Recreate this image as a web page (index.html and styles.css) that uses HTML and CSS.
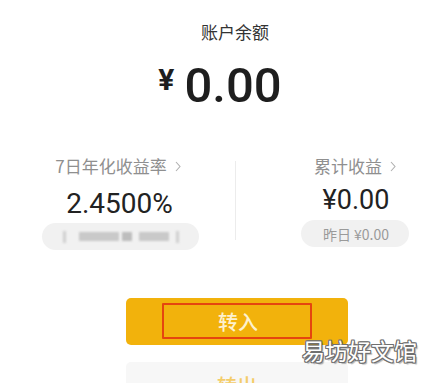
FILE: index.html
```html
<!DOCTYPE html>
<html lang="zh">
<head>
<meta charset="utf-8">
<link rel="stylesheet" href="styles.css">
</head>
<body>
<div class="page">
  <div class="title">账户余额</div>
  <div class="amount"><span class="yen">¥</span><span class="num">0.00</span></div>

  <div class="stats">
    <div class="col col-left">
      <div class="label">7日年化收益率<svg class="chev" width="6" height="11" viewBox="0 0 6 11"><path d="M1 1 L5 5.5 L1 10" fill="none" stroke="#b0b0b0" stroke-width="1.1"/></svg></div>
      <div class="value v-left">2.4500%</div>
      <div class="pill pill-left">
        <span class="blur b1"></span><span class="blur b2"></span><span class="blur b3"></span><span class="blur b4"></span><span class="blur b5"></span>
      </div>
    </div>
    <div class="divider"></div>
    <div class="col col-right">
      <div class="label">累计收益<svg class="chev" width="6" height="11" viewBox="0 0 6 11"><path d="M1 1 L5 5.5 L1 10" fill="none" stroke="#b0b0b0" stroke-width="1.1"/></svg></div>
      <div class="value v-right">¥0.00</div>
      <div class="pill pill-right">昨日 ¥0.00</div>
    </div>
  </div>

  <div class="actions">
    <div class="btn btn-in">转入<span class="mark"></span></div>
    <div class="btn btn-out">转出</div>
    <div class="watermark">易坊好文馆</div>
  </div>
</div>
</body>
</html>
```

FILE: styles.css
```css
html, body {
  margin: 0;
  padding: 0;
  background: #ffffff;
}
.page {
  width: 446px;
  height: 383px;
  overflow: hidden;
  position: relative;
  padding-top: 22px;
  box-sizing: border-box;
  font-family: "Noto Sans CJK SC", "Noto Sans", sans-serif;
}
.title {
  text-align: center;
  padding-left: 24px;
  font-size: 17px;
  line-height: 20px;
  color: #333333;
}
.amount {
  margin-top: 19px;
  display: flex;
  justify-content: center;
  align-items: flex-start;
  padding-right: 6px;
  font-family: Roboto, "Liberation Sans", sans-serif;
  color: #1e1e1e;
}
.yen {
  font-size: 30px;
  font-weight: 700;
  line-height: 30px;
  margin-top: 4px;
  margin-right: 10px;
}
.num {
  font-size: 49px;
  line-height: 49px;
  font-weight: 500;
}
.stats {
  margin-top: 46px;
  display: flex;
  align-items: stretch;
}
.col {
  display: flex;
  flex-direction: column;
  align-items: center;
}
.col-left {
  width: 235px;
  padding-left: 1px;
  box-sizing: border-box;
}
.col-right {
  flex: 1;
  padding-left: 28px;
}
.divider {
  width: 1px;
  background: #ececec;
  margin: 5px 0 10px;
}
.label {
  font-size: 17px;
  line-height: 20px;
  color: #8f8f8f;
  display: flex;
  align-items: center;
}
.chev {
  margin-left: 8px;
  margin-top: 1px;
}
.value {
  font-family: Roboto, "Liberation Sans", sans-serif;
  color: #222222;
}
.v-left {
  font-size: 28px;
  line-height: 28px;
  margin-top: 14px;
  padding-left: 3px;
}
.v-right {
  font-size: 27px;
  line-height: 27px;
  margin-top: 11px;
  padding-left: 2px;
}
.pill {
  background: #f1f1f1;
  border-radius: 14px;
  height: 27px;
  display: flex;
  align-items: center;
  justify-content: center;
}
.pill-left {
  width: 157px;
  margin-top: 5px;
  margin-left: 5px;
  position: relative;
  gap: 3px;
}
.v-right + .pill-right {
  margin-top: 6px;
}
.pill-right {
  width: 106px;
  font-size: 14px;
  color: #9a9a9a;
  font-family: "Noto Sans CJK SC", Roboto, sans-serif;
  padding-left: 2px;
}
.blur {
  display: block;
  height: 9px;
  background: #c9c9c9;
  filter: blur(1.2px);
}
.b1 { width: 3px; height: 12px; background: #d0d0d0; margin-right: 10px; }
.b2 { width: 40px; }
.b3 { width: 10px; background: #bdbdbd; }
.b4 { width: 30px; margin-left: 4px; }
.b5 { width: 3px; height: 12px; background: #d0d0d0; margin-left: 4px; }
.actions {
  margin-top: 48px;
  padding-left: 126px;
  position: relative;
}
.btn {
  width: 222px;
  height: 47px;
  border-radius: 5px;
  display: flex;
  align-items: center;
  justify-content: center;
  font-size: 20px;
  font-weight: 500;
  position: relative;
}
.btn-in {
  background: #f2b20c;
  color: #fdf1cf;
  padding-left: 2px;
  box-sizing: border-box;
}
.btn-out {
  margin-top: 17px;
  background: #f7f7f7;
  color: #f4cd6a;
}
.mark {
  position: absolute;
  left: 36px;
  top: 5px;
  width: 146px;
  height: 32px;
  border: 2px solid #e5450f;
  border-radius: 1px;
}
.watermark {
  position: absolute;
  left: 302px;
  top: 38px;
  font-size: 23px;
  line-height: 28px;
  color: #ffffff;
  text-shadow:
    1px 0 0 #707070, -1px 0 0 #707070, 0 1px 0 #707070, 0 -1px 0 #707070,
    1px 1px 0 #707070, -1px -1px 0 #707070, 1px -1px 0 #707070, -1px 1px 0 #707070,
    2px 2px 1px rgba(0,0,0,0.3);
}
```
